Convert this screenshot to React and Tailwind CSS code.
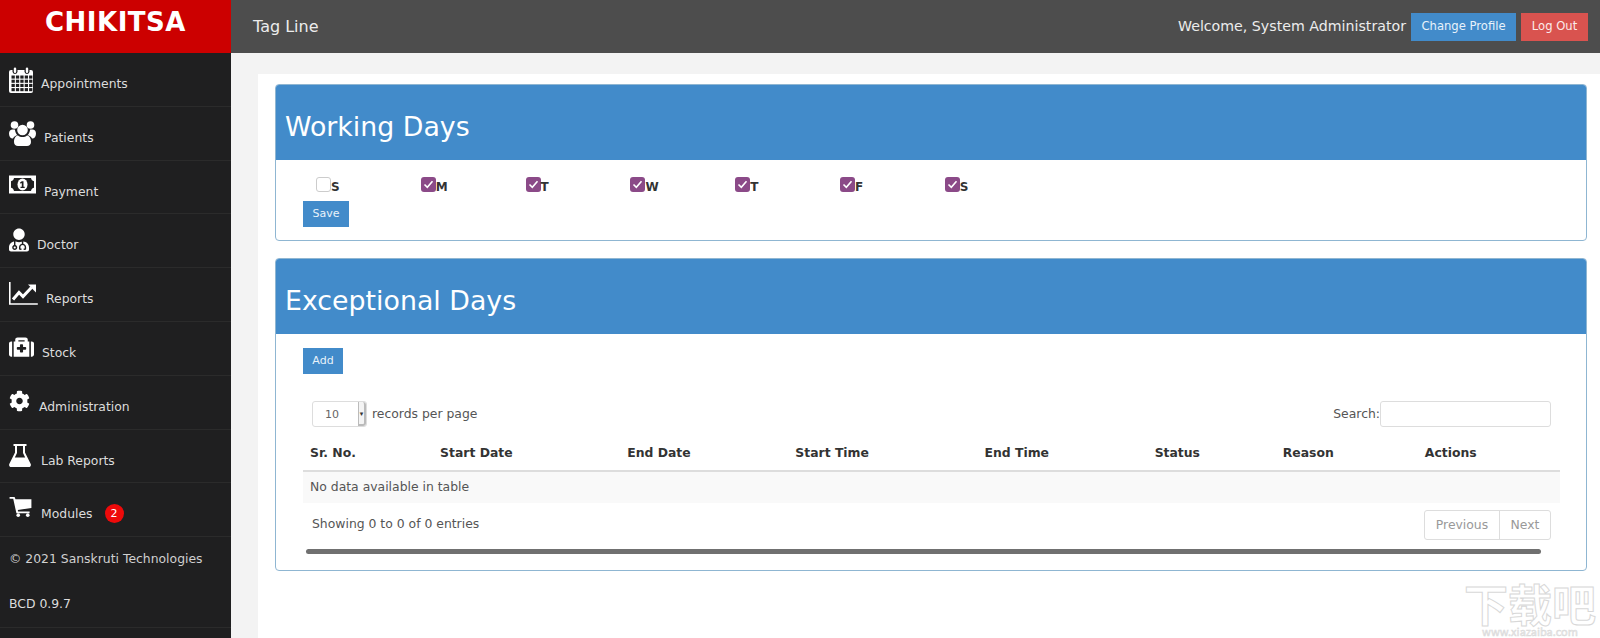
import { FaUserMd, FaMedkit, FaCog } from 'react-icons/fa';

const SIDEBAR_BG = '#1f1f20';

function CalendarIcon({ className }) {
  const cols = [2.5, 6.9, 11.3, 15.7, 20.1];
  const rows = [8.5, 12.7, 16.9, 21.1];
  return (
    <svg viewBox="0 0 24 26" className={className}>
      <rect x="0" y="3" width="24" height="23" rx="2" fill="#fff" />
      {rows.map((y) =>
        cols.map((x) => <rect key={`${x}-${y}`} x={x} y={y} width="3.3" height="3.1" fill={SIDEBAR_BG} />)
      )}
      <rect x="3.5" y="0" width="5" height="7" rx="2.4" fill={SIDEBAR_BG} />
      <rect x="15.5" y="0" width="5" height="7" rx="2.4" fill={SIDEBAR_BG} />
      <rect x="4.8" y="0.5" width="2.4" height="5.5" rx="1.2" fill="#fff" />
      <rect x="16.8" y="0.5" width="2.4" height="5.5" rx="1.2" fill="#fff" />
    </svg>
  );
}

function UsersIcon({ className }) {
  return (
    <svg viewBox="0 0 27 25" className={className} fill="#fff">
      <circle cx="5.5" cy="4" r="3.8" />
      <circle cx="21.5" cy="4" r="3.8" />
      <path d="M0 12.5c0-2.5 1.6-4 3.6-4h2.2c.5 2.4 1.3 4.4 2.4 5.6-2 .8-3.6 2-4.3 3.4C1.5 17.5 0 15.5 0 12.5z" />
      <path d="M27 12.5c0-2.5-1.6-4-3.6-4h-2.2c-.5 2.4-1.3 4.4-2.4 5.6 2 .8 3.6 2 4.3 3.4 2.4 0 3.9-2 3.9-5z" />
      <circle cx="13.5" cy="9" r="5.3" />
      <path d="M5 21c0-4 2-6.5 4-6.5 1.2 1 2.8 1.5 4.5 1.5s3.3-.5 4.5-1.5c2 0 4 2.5 4 6.5 0 2.5-1.8 4-4 4H9c-2.2 0-4-1.5-4-4z" />
    </svg>
  );
}

function MoneyIcon({ className }) {
  return (
    <svg viewBox="0 0 27 19" className={className}>
      <rect width="27" height="18" y="0.5" fill="#fff" />
      <path d="M5 3h17c.3 1.8 1.5 2.9 3 3.2v6.6c-1.5.3-2.7 1.4-3 3.2H5c-.3-1.8-1.5-2.9-3-3.2V6.2C3.5 5.9 4.7 4.8 5 3z" fill={SIDEBAR_BG} />
      <ellipse cx="13.5" cy="9.5" rx="5" ry="6" fill="#fff" />
      <path d="M12.8 6.3h1.7v5.4h1.2V13h-4.2v-1.3h1.3V8l-1.2.7-.6-1.1z" fill={SIDEBAR_BG} />
    </svg>
  );
}

function ChartIcon({ className }) {
  return (
    <svg viewBox="0 0 29 23" className={className} fill="none">
      <path d="M0.8 0v22h28" stroke="#fff" strokeWidth="1.6" />
      <path d="M4 17.5l6-7 4 4 8.5-9" stroke="#fff" strokeWidth="3" />
      <path d="M19 2.5h8v8z" fill="#fff" />
    </svg>
  );
}

function StockIcon({ className }) {
  return <FaMedkit className={className} preserveAspectRatio="none" />;
}

function FlaskIcon({ className }) {
  return (
    <svg viewBox="0 0 22 23" className={className}>
      <path d="M4.5 0h13v2H16v6.5l5.6 11.2c.8 1.6-.1 3.3-1.8 3.3H2.2C.5 23-.4 21.3.4 19.700L6 8.500V2H4.500z" fill="#fff" />
      <path d="M8 2h6v7l2.200 4.500H5.800L8 9z" fill={SIDEBAR_BG} />
    </svg>
  );
}

function CartIcon({ className }) {
  return (
    <svg viewBox="0 0 24 22" className={className} fill="#fff">
      <path d="M0 0h5.500l1 2.500H24v9.500L9 14.200l.4 1.800H22v2H7.500L4 2H0z" />
      <circle cx="9.5" cy="20" r="2" />
      <circle cx="20" cy="20" r="2" />
    </svg>
  );
}

const navItems = [
  { label: 'Appointments', Icon: CalendarIcon, iconClass: 'w-[24px] h-[26px]', gap: 'mr-[8px]' },
  { label: 'Patients', Icon: UsersIcon, iconClass: 'w-[27px] h-[25px]', gap: 'mr-[8px]' },
  { label: 'Payment', Icon: MoneyIcon, iconClass: 'w-[27px] h-[19px]', gap: 'mr-[8px]' },
  { label: 'Doctor', Icon: FaUserMd, iconClass: 'w-[20px] h-[24px] text-white', gap: 'mr-[8px]' },
  { label: 'Reports', Icon: ChartIcon, iconClass: 'w-[29px] h-[23px]', gap: 'mr-[8px]' },
  { label: 'Stock', Icon: StockIcon, iconClass: 'w-[25px] h-[22px] text-white', gap: 'mr-[8px]' },
  { label: 'Administration', Icon: FaCog, iconClass: 'w-[21px] h-[22px] text-white', gap: 'mr-[9px]' },
  { label: 'Lab Reports', Icon: FlaskIcon, iconClass: 'w-[22px] h-[23px]', gap: 'mr-[10px]' },
  { label: 'Modules', Icon: CartIcon, iconClass: 'w-[23px] h-[20px]', gap: 'mr-[9px]', badge: 2 },
];

const days = [
  { label: 'S', checked: false },
  { label: 'M', checked: true },
  { label: 'T', checked: true },
  { label: 'W', checked: true },
  { label: 'T', checked: true },
  { label: 'F', checked: true },
  { label: 'S', checked: true },
];

const columns = [
  { label: 'Sr. No.', width: 'w-[130px]' },
  { label: 'Start Date', width: 'w-[187px]' },
  { label: 'End Date', width: 'w-[168px]' },
  { label: 'Start Time', width: 'w-[189px]' },
  { label: 'End Time', width: 'w-[170px]' },
  { label: 'Status', width: 'w-[128px]' },
  { label: 'Reason', width: 'w-[142px]' },
  { label: 'Actions', width: 'w-[142px]' },
];

function Sidebar() {
  return (
    <aside className="w-[231px] shrink-0 bg-[#1f1f20] text-[#dcdcdc]">
      <div className="h-[53px] bg-[#cc0000] text-center text-[26px] leading-[44px] font-bold tracking-[0.5px] text-white">
        CHIKITSA
      </div>
      {navItems.map(({ label, Icon, iconClass, gap, badge }) => (
        <div key={label} className="h-[53.8px] border-b border-[#2b2b2b] pl-[9px] pt-[14px] flex items-start">
          <Icon className={`${iconClass} ${gap} shrink-0`} />
          <span className="mt-[9px] text-[12.4px] leading-[16px]">{label}</span>
          {badge && (
            <span className="ml-[12px] mt-[7px] flex h-[19px] w-[19px] items-center justify-center rounded-full bg-[#ee0a0a] text-[11px] text-white">
              {badge}
            </span>
          )}
        </div>
      ))}
      <div className="border-b border-[#2b2b2b] pl-[9px] pt-[14px] h-[91px] text-[12.4px] leading-[16px]">
        <p className="text-[#d0d0d0]">© 2021 Sanskruti Technologies</p>
        <p className="mt-[29px]">BCD 0.9.7</p>
      </div>
    </aside>
  );
}

function Header() {
  return (
    <header className="h-[53px] bg-[#4d4d4d] flex items-center text-[#ececec] pl-[22px] pr-[12px]">
      <span className="text-[16px] leading-[53px]">Tag Line</span>
      <span className="ml-auto text-[14.2px] mr-[5px]">Welcome, System Administrator</span>
      <button className="h-[28px] w-[105px] mr-[5px] bg-[#428bca] text-[11.6px] text-[#e8f2fa]">Change Profile</button>
      <button className="h-[28px] w-[67px] bg-[#d9534f] text-[11.6px] text-[#fbeaea]">Log Out</button>
    </header>
  );
}

function Card({ title, children, className }) {
  return (
    <section className={`border border-[#8fb6d2] rounded-[4px] bg-white overflow-hidden ${className}`}>
      <h2 className="h-[75px] bg-[#428bca] pl-[9px] text-[26.8px] leading-[83px] text-white">{title}</h2>
      {children}
    </section>
  );
}

function Day({ label, checked }) {
  return (
    <label className="w-[104.8px] pl-[13px] flex items-start text-[12px] font-bold text-[#333]">
      <span className={`h-[15px] w-[15px] rounded-[3px] flex items-center justify-center ${checked ? 'bg-[#8b4a88]' : 'bg-white border border-[#ccc]'}`}>
        {checked && (
          <svg viewBox="0 0 15 15" className="h-[15px] w-[15px]" fill="none">
            <path d="M3.5 7.5l2.8 2.8 5.2-6" stroke="#fff" strokeWidth="1.6" />
          </svg>
        )}
      </span>
      <span className="mt-[2px] leading-[16px]">{label}</span>
    </label>
  );
}

export default function App() {
  return (
    <div className="relative h-[638px] w-[1600px] overflow-hidden flex bg-white font-['DejaVu_Sans',sans-serif]">
      <Sidebar />
      <div className="flex-1 min-w-0">
        <Header />
        <div className="h-[21px] bg-[#f3f3f3]" />
        <main className="flex">
          <div className="w-[27px] h-[564px] bg-[#f3f3f3]" />
          <div className="w-[1312px] ml-[17px] pt-[10px]">
            <Card title="Working Days" className="h-[157px]">
              <div className="flex pl-[27px] pt-[17px]">
                {days.map((day, i) => (
                  <Day key={i} {...day} />
                ))}
              </div>
              <button className="ml-[27px] mt-[6px] h-[26px] w-[46px] bg-[#428bca] text-[11px] text-[#e8f2fa]">Save</button>
            </Card>

            <Card title="Exceptional Days" className="mt-[17px] h-[313px]">
              <div className="px-[27px] pt-[13px]">
                <button className="h-[26px] w-[40px] bg-[#428bca] text-[11px] text-[#e8f2fa]">Add</button>

                <div className="mt-[27px] flex items-center justify-between pl-[9px] pr-[8px] text-[12.4px] text-[#555]">
                  <div className="flex items-center">
                    <div className="relative h-[26px] w-[55px] rounded-[3px] border border-[#ddd] pl-[12px] text-[11px] leading-[25px] text-[#666]">
                      10
                      <span className="absolute right-0 top-0 h-full w-[8px] rounded-r-[3px] border-l border-r-2 border-b-2 border-[#bbb] bg-[#f4f4f4] text-center text-[7px] leading-[24px] text-[#333]">▾</span>
                    </div>
                    <span className="ml-[5px]">records per page</span>
                  </div>
                  <div className="flex items-center">
                    <span>Search:</span>
                    <div className="h-[26px] w-[171px] rounded-[3px] border border-[#ddd]" />
                  </div>
                </div>

                <table className="mt-[10px] w-[1257px] table-fixed text-[12.4px]">
                  <thead>
                    <tr className="border-b-2 border-[#ddd]">
                      {columns.map((col) => (
                        <th key={col.label} className={`${col.width} h-[34px] px-[7px] text-left font-bold text-[#333]`}>{col.label}</th>
                      ))}
                    </tr>
                  </thead>
                  <tbody>
                    <tr className="bg-[#f9f9f9]">
                      <td colSpan={8} className="h-[32px] px-[7px] text-[#555]">No data available in table</td>
                    </tr>
                  </tbody>
                </table>

                <div className="mt-[6px] flex items-start justify-between pl-[9px] pr-[8px] text-[12.4px]">
                  <span className="mt-[6px] text-[#555]">Showing 0 to 0 of 0 entries</span>
                  <div className="mt-[1px] flex h-[30px] rounded-[3px] border border-[#ddd] text-[#999] leading-[28px]">
                    <span className="w-[75px] border-r border-[#ddd] text-center">Previous</span>
                    <span className="w-[50px] text-center">Next</span>
                  </div>
                </div>

                <div className="mt-[9px] ml-[3px] h-[5px] w-[1235px] rounded-full bg-[#707070]" />
              </div>
            </Card>
          </div>
        </main>
      </div>

      {/* watermark, bottom right corner */}
      <div className="absolute right-[3px] bottom-[1px] w-[134px] text-center whitespace-nowrap font-['Noto_Sans_CJK_SC',sans-serif] text-white [-webkit-text-stroke:1px_#d8d8d8]">
        <div className="text-[44px] leading-[46px] font-bold">下载吧</div>
        <div className="text-[11px] leading-[11px] [-webkit-text-stroke:0.5px_#d8d8d8] text-[#eee]">www.xiazaiba.com</div>
      </div>
    </div>
  );
}
